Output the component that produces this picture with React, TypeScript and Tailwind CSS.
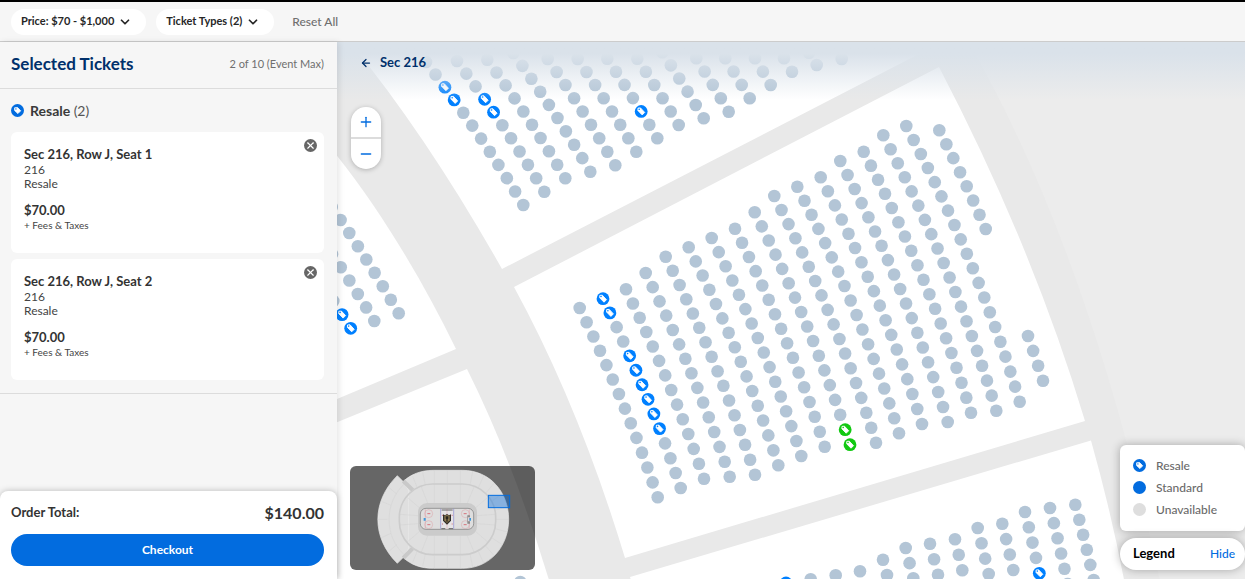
import { ArrowLeft, ChevronDown, Minus, Plus, X } from "lucide-react";

type Row = {
  from: [number, number];
  to: [number, number];
  count: number;
  resale?: number[];
  selected?: number[];
};

const ROW_RADIUS = 1500;

const rows: Row[] = [
  // section 215
  { from: [426, 62], to: [523.3, 205], count: 12, resale: [2, 3] },
  { from: [457, 61], to: [544.3, 191.7], count: 11, resale: [3, 4] },
  { from: [487.3, 59.7], to: [565.3, 178.3], count: 10 },
  { from: [513.3, 53], to: [590.3, 171.7], count: 10 },
  { from: [547.7, 59], to: [615.3, 165.3], count: 9 },
  { from: [577.7, 59], to: [636.3, 151.7], count: 8 },
  { from: [607.3, 58.7], to: [657.3, 138.3], count: 7, resale: [4] },
  { from: [637.3, 58.7], to: [678.7, 125], count: 6 },
  { from: [662.3, 52.3], to: [703.7, 118.3], count: 6 },
  { from: [696.3, 58.3], to: [728.7, 111.7], count: 5 },
  { from: [725.3, 58.3], to: [749.7, 98.3], count: 4 },
  { from: [755, 58.3], to: [770.7, 85], count: 3 },
  { from: [784, 58.3], to: [792, 71.7], count: 2 },
  { from: [809, 52.7], to: [816.7, 65], count: 2 },
  { from: [841.7, 59], to: [841.7, 59], count: 1 },
  // section 216
  { from: [579.7, 308], to: [657.7, 497.3], count: 14 },
  { from: [603, 298.7], to: [680.7, 488], count: 14, resale: [0, 1, 4, 5, 6, 7, 8, 9] },
  { from: [626, 289.3], to: [704, 478.7], count: 14 },
  { from: [645.7, 273], to: [729.7, 476.7], count: 15 },
  { from: [665.7, 256.7], to: [755, 474.7], count: 16 },
  { from: [688.7, 247.3], to: [778.3, 465.3], count: 16 },
  { from: [711.7, 238], to: [801.3, 456], count: 16 },
  { from: [735, 228.7], to: [824.7, 446.7], count: 16 },
  { from: [754.7, 212.3], to: [850, 444.7], count: 17, selected: [15, 16] },
  { from: [774.3, 196], to: [876, 442.7], count: 18 },
  { from: [797.3, 186.7], to: [899, 433.3], count: 18 },
  { from: [820.7, 177.3], to: [922, 424], count: 18 },
  { from: [840.3, 161], to: [947.7, 422], count: 19 },
  { from: [863.7, 151.7], to: [971, 412.7], count: 19 },
  { from: [883.3, 135.3], to: [996.3, 410.7], count: 20 },
  { from: [906.3, 126], to: [1019.7, 401.7], count: 20 },
  { from: [939.3, 130.3], to: [985.7, 229], count: 8 },
  { from: [1028, 336], to: [1043, 380.7], count: 4 },
  // lower bowl
  { from: [331.7, 207], to: [398.7, 313.3], count: 9 },
  { from: [332, 254], to: [374.3, 321], count: 6 },
  { from: [333.3, 301], to: [350.7, 328.3], count: 3, resale: [1, 2] },
  { from: [520.3, 582], to: [520.3, 582], count: 1 },
  // section 217
  { from: [786, 583], to: [786, 583], count: 1, resale: [0] },
  { from: [810.7, 579.3], to: [810.7, 579.3], count: 1 },
  { from: [835.7, 575.3], to: [835.7, 575.3], count: 1 },
  { from: [860, 571.3], to: [860, 571.3], count: 1 },
  { from: [883, 559.7], to: [887, 575], count: 2 },
  { from: [905.7, 548], to: [913.3, 578.3], count: 3 },
  { from: [930, 543.7], to: [938, 574.7], count: 3 },
  { from: [955, 539.3], to: [962.3, 570.3], count: 3 },
  { from: [977.7, 528], to: [988.7, 574], count: 4 },
  { from: [1002.3, 523.7], to: [1013.3, 570], count: 4 },
  { from: [1025, 512], to: [1039.3, 573.3], count: 5, resale: [4] },
  { from: [1050, 508], to: [1067.7, 584], count: 6 },
  { from: [1075.3, 504.7], to: [1093.7, 580], count: 6 },
];

const sections = [
  "M345 36 C400 103 452 180 502 269 L915 56 L950 36 Z",
  "M514 287 Q579 406 625 558 L1085 421 Q1032 245 939 67 Z",
  "M330 147 C379 207 423 281 456 349 L330 402 Z",
  "M467 369 Q514 463 552 590 L330 590 L330 425 Z",
  "M630 577 L1091 440.500 Q1112 515 1126 590 L634 590 Z",
];

const tickets = [
  { title: "Sec 216, Row J, Seat 1", section: "216", type: "Resale", price: "$70.00" },
  { title: "Sec 216, Row J, Seat 2", section: "216", type: "Resale", price: "$70.00" },
];

// Seats of a row sit on a shallow arc between its two end seats
function seatAt(row: Row, index: number) {
  const t = row.count > 1 ? index / (row.count - 1) : 0;
  const dx = row.to[0] - row.from[0];
  const dy = row.to[1] - row.from[1];
  const length = Math.hypot(dx, dy) || 1;
  const bulge = ((length * length) / (2 * ROW_RADIUS)) * t * (1 - t);
  return {
    x: row.from[0] + dx * t + (dy / length) * bulge,
    y: row.from[1] + dy * t - (dx / length) * bulge,
  };
}

const TagSeat = ({ x, y, color }: { x: number; y: number; color: string }) => (
  <g transform={`translate(${x} ${y})`}>
    <circle r="6.400" fill={color} />
    <path
      d="M-3.200 -3.300 L-0.700 -3.500 L3.500 1 L1 3.500 L-3.300 -0.900 Z"
      fill="white"
      stroke="white"
      strokeWidth="0.900"
      strokeLinejoin="round"
    />
    <circle cx="-2" cy="-2.200" r="0.800" fill={color} />
  </g>
);

const ResaleIcon = () => (
  <svg className="size-[13px] shrink-0" viewBox="0 0 13 13" aria-hidden="true">
    <circle cx="6.500" cy="6.500" r="6.500" fill="#026cdf" />
    <path
      d="M3.600 3.800 L6.600 3.600 L9.700 6.800 L6.900 9.600 L3.600 6.500 Z"
      fill="white"
      stroke="white"
      strokeWidth="0.800"
      strokeLinejoin="round"
    />
    <circle cx="4.900" cy="4.900" r="0.700" fill="#026cdf" />
  </svg>
);

const SeatMap = () => (
  <svg
    className="absolute inset-0 h-full w-full"
    viewBox="337 42 908 537"
    preserveAspectRatio="xMinYMin slice"
    role="img"
    aria-label="Seat map"
  >
    <rect x="337" y="42" width="1600" height="1200" fill="#e9e9e9" />
    <path d="M965 36 Q1090 250 1162 590 L1900 590 L1900 36 Z" fill="#ececec" />
    {sections.map((d) => (
      <path key={d} d={d} fill="white" />
    ))}
    {rows.map((row, r) =>
      Array.from({ length: row.count }, (_, i) => {
        const { x, y } = seatAt(row, i);
        const key = `${r}-${i}`;
        if (row.selected?.includes(i)) return <TagSeat key={key} x={x} y={y} color="#12c912" />;
        if (row.resale?.includes(i)) return <TagSeat key={key} x={x} y={y} color="#0080ff" />;
        return <circle key={key} cx={x} cy={y} r="6.300" fill="#b3c5d6" />;
      })
    )}
  </svg>
);

const MiniMap = () => (
  <svg viewBox="30 33 555 312" className="block h-full w-full" role="img" aria-label="Arena overview">
    <g fill="#dfdfdf" stroke="#ececec" strokeWidth="2">
      <path d="M172 62 L215 105 V282 L172 325 C94 248 94 139 172 62 Z" />
      <path d="M190 79 C213 58 242 46 280 46 H368 C450 46 506 112 506 193 S450 340 368 340 H280 C242 340 213 329 190 308 L205 282 V105 Z" />
    </g>
    <g fill="none" stroke="#d3d3d3" strokeWidth="1.500">
      <path d="M196 84 C131 140 131 248 196 302" />
      <path d="M113 193 H142 M124 139 L153 151 M124 248 L153 235 M145 96 L170 117 M145 291 L170 269" />
      <path d="M283 46 V84 M322 46 V84 M361 46 V84 M283 301 V340 M322 301 V340 M361 301 V340" />
      <path d="M248 52 L256 90 M218 64 L232 99 M248 334 L256 297 M218 322 L232 288" />
      <path d="M398 50 L390 90 M431 63 L415 98 M461 86 L436 116 M485 117 L455 139 M502 155 L465 166 M506 193 H467 M502 231 L465 221 M485 268 L455 248 M461 300 L436 272 M431 324 L415 289 M398 336 L390 297" />
      <path d="M283 87 V143 M322 87 V143 M361 87 V143 M283 243 V299 M322 243 V299 M361 243 V299" />
      <path d="M244 96 L263 144 M203 128 L240 160 M180 178 L234 182 M180 210 L234 206 M203 260 L240 228 M244 291 L263 243 M402 96 L382 144 M442 128 L405 160 M465 178 L411 182 M465 210 L411 206 M442 260 L405 228 M402 291 L382 243" />
    </g>
    <path d="M190 78 L218 105 M190 309 L218 280" stroke="#c9c9c9" strokeWidth="12" />
    <rect x="178" y="87" width="289" height="212" rx="100" fill="none" stroke="#cccccc" strokeWidth="5" />
    <rect x="234" y="144" width="177" height="98" rx="27" fill="#cbcbcb" />
    <rect x="241" y="160" width="160" height="63" rx="17" fill="#dedede" stroke="#777777" strokeWidth="2" />
    <rect x="302" y="162" width="39" height="59" fill="#e6e4e6" />
    <path d="M302 161 V222 M341 161 V222" stroke="#8b8bd0" strokeWidth="2" />
    <path d="M321 161 V222 M256 163 V220 M388 163 V220" stroke="#dfa0a8" strokeWidth="1.500" />
    <g fill="none" stroke="#dda0a6" strokeWidth="1.500">
      <circle cx="266" cy="176" r="12" />
      <circle cx="266" cy="209" r="12" />
      <circle cx="376" cy="176" r="12" />
      <circle cx="376" cy="209" r="12" />
    </g>
    <path d="M262 176 H271 M262 209 H271 M371 176 H380 M371 209 H380 M306 181 H309 M306 207 H309 M335 181 H338 M335 207 H338" stroke="#d8717c" strokeWidth="3" />
    <path d="M251 189 H257 V197 H251 Z M388 189 H393 V197 H388 Z" fill="#3b98dc" />
    <path d="M382 181 H390 V187 H384 V199 H390 V206 H382 Z" fill="#8b8b8b" />
    <path d="M305 165 H338 M304 221 H316 M326 221 H339" stroke="#666666" strokeWidth="3" />
    <path d="M309 178 L315 181 L321 177 L327 181 L333 178 V197 L321 209 L309 197 Z" fill="#302d28" />
    <path d="M313 182 L321 180 L329 182 V196 L321 204 L313 196 Z" fill="#8d7951" />
    <path d="M317 184 H325 V191 L323 192 V200 H319 V192 L317 191 Z" fill="#29251f" />
    <rect x="445" y="121" width="64" height="37" fill="#026cdf" fillOpacity="0.400" stroke="#026cdf" strokeWidth="3" />
  </svg>
);

const Header = () => (
  <header className="flex h-[42px] shrink-0 items-center gap-2.5 border-t-2 border-b border-t-black border-b-[#cccccc] bg-[#f6f6f6] px-[11px]">
    <button type="button" className="flex h-[26px] items-center gap-1 rounded-full bg-white pr-3.5 pl-2.5 text-[11px] font-bold text-[#262626]">
      Price: $70 - $1,000
      <ChevronDown className="size-3.5" strokeWidth={3} />
    </button>
    <button type="button" className="flex h-[26px] items-center gap-1 rounded-full bg-white pr-3.5 pl-2.5 text-[11px] font-bold text-[#262626]">
      Ticket Types (2)
      <ChevronDown className="size-3.5" strokeWidth={3} />
    </button>
    <button type="button" className="px-2 text-[12px] font-medium text-[#6f6f6f]">
      Reset All
    </button>
  </header>
);

const Sidebar = () => (
  <aside className="relative z-10 flex w-[337px] shrink-0 flex-col bg-[#f6f6f6] shadow-[2px_0_6px_rgba(0,0,0,0.1)]">
    <div className="flex h-[47px] shrink-0 items-center justify-between border-b border-[#dcdcdc] pr-[13px] pb-0.5 pl-[11px]">
      <h2 className="text-[17px] font-bold text-[#00306b]">Selected Tickets</h2>
      <p className="text-[11px] text-[#6f6f6f]">2 of 10 (Event Max)</p>
    </div>
    <section className="border-b border-[#dcdcdc] pt-[11px] pr-[13px] pb-[13px] pl-[11px]">
      <h3 className="flex h-5 items-center gap-1.5 text-[14px] font-bold text-[#3a3a3a]">
        <ResaleIcon />
        <span>
          Resale <span className="font-normal text-[#555555]">(2)</span>
        </span>
      </h3>
      <ul className="mt-3 flex flex-col gap-1.5">
        {tickets.map((ticket) => (
          <li key={ticket.title} className="relative rounded-md bg-white px-[13px] pt-[13px] pb-[22px] text-[12px] leading-[14px] text-[#444444]">
            <h4 className="text-[13px] leading-[18px] font-bold text-[#333333]">{ticket.title}</h4>
            <p>{ticket.section}</p>
            <p>{ticket.type}</p>
            <p className="mt-2.5 text-[13px] leading-[18px] font-bold text-[#333333]">{ticket.price}</p>
            <p className="text-[10px] leading-3">+ Fees &amp; Taxes</p>
            <button
              type="button"
              aria-label={`Remove ${ticket.title}`}
              className="absolute top-[7px] right-[7px] flex size-[13px] items-center justify-center rounded-full bg-[#666666] text-white"
            >
              <X className="size-[11px]" strokeWidth={2.5} />
            </button>
          </li>
        ))}
      </ul>
    </section>
    <div className="mt-auto rounded-t-lg bg-white pt-3 pr-[13px] pb-[13px] pl-[11px] shadow-[0_0_6px_rgba(0,0,0,0.25)]">
      <div className="flex h-5 items-center justify-between font-bold text-[#333333]">
        <span className="text-[13px]">Order Total:</span>
        <span className="text-[16px]">$140.00</span>
      </div>
      <button type="button" className="mt-[11px] h-8 w-full rounded-full bg-[#026cdf] text-[12px] font-bold text-white">
        Checkout
      </button>
    </div>
  </aside>
);

const Legend = () => (
  <div className="absolute right-0 bottom-[9px] w-[125px]">
    <ul className="flex flex-col gap-[9px] rounded-md bg-white px-[13px] pt-3.5 pb-[15px] text-[12px] leading-[13px] font-medium text-[#6a6a6a] shadow-[0_0_10px_rgba(0,0,0,0.3)]">
      <li className="flex items-center gap-2.5">
        <ResaleIcon />
        Resale
      </li>
      <li className="flex items-center gap-2.5">
        <span className="size-[13px] rounded-full bg-[#026cdf]" />
        Standard
      </li>
      <li className="flex items-center gap-2.5">
        <span className="size-[13px] rounded-full bg-[#dedede]" />
        Unavailable
      </li>
    </ul>
    <div className="mt-[7px] flex h-8 items-center justify-between rounded-full bg-white pr-2.5 pl-[13px] shadow-[0_0_10px_rgba(0,0,0,0.3)]">
      <span className="text-[13px] font-bold text-black">Legend</span>
      <button type="button" className="text-[12px] font-medium text-[#026cdf]">
        Hide
      </button>
    </div>
  </div>
);

export default function App() {
  return (
    <div className="flex h-screen flex-col overflow-hidden font-['Lato','Liberation_Sans',sans-serif]">
      <Header />
      <div className="flex min-h-0 flex-1">
        <Sidebar />
        <main className="relative min-w-0 flex-1 overflow-hidden bg-[#e9e9e9]">
          <SeatMap />
          <div className="absolute inset-x-0 top-0 h-[58px] bg-linear-to-b from-[#dae2ea] from-20% to-[#dae2ea]/0" />
          <button type="button" className="absolute top-[11px] left-[23px] flex h-5 items-center gap-2 text-[13px] font-bold text-[#00306b]">
            <ArrowLeft className="size-3" strokeWidth={2.5} />
            Sec 216
          </button>
          <div className="absolute top-[65px] left-3.5 flex flex-col gap-0.5 overflow-hidden rounded-full bg-[#dcdcdc] text-[#026cdf] shadow-[0_1px_5px_rgba(0,0,0,0.25)]">
            <button type="button" aria-label="Zoom in" className="flex h-[30px] w-[30px] items-center justify-center bg-white">
              <Plus className="size-4" strokeWidth={2} />
            </button>
            <button type="button" aria-label="Zoom out" className="flex h-[30px] w-[30px] items-center justify-center bg-white">
              <Minus className="size-4" strokeWidth={2} />
            </button>
          </div>
          <div className="absolute bottom-[9px] left-[13px] h-[104px] w-[185px] overflow-hidden rounded-md bg-black/60">
            <MiniMap />
          </div>
          <Legend />
        </main>
      </div>
    </div>
  );
}
